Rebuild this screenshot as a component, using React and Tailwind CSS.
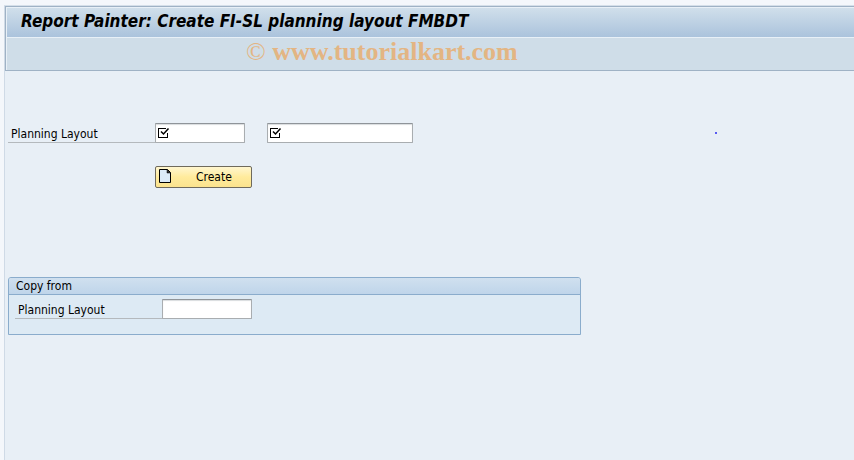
const CheckMark = () => (
  <svg
    className="w-3 h-3 pointer-events-none col-start-1 row-start-1 ml-[3px] self-center"
    viewBox="0 0 12 12"
    fill="none"
    stroke="#000"
    shapeRendering="crispEdges"
    aria-hidden="true"
  >
    <path d="M8 1.5H0.5V10.5H9.5V6" />
    <path
      d="M3 4.5L5.5 7L10.5 1.5"
      strokeWidth="1.5"
      shapeRendering="geometricPrecision"
    />
  </svg>
);

const PageIcon = () => (
  <svg className="w-3 h-[14px] self-start mt-[2px]" viewBox="0 0 12 14" aria-hidden="true">
    <path
      d="M0.5 0.5H8.5L11.5 3.5V13.5H0.5Z"
      fill="#dcebf7"
      stroke="#000"
      strokeWidth="1"
    />
    <path d="M8 0.5V4H11.5Z" fill="#333" stroke="#000" strokeWidth="0.5" />
  </svg>
);

const Field = ({ id, label, className, required }) => (
  <div className={`grid ${className}`}>
    <input
      id={id}
      type="text"
      aria-label={label}
      className="w-full h-5 col-start-1 row-start-1 bg-white border border-[#a9adb0] border-t-[#8f9499] rounded-[1px] px-1 shadow-[inset_0_1px_1px_#d9dcde] outline-none"
    />
    {required && <CheckMark />}
  </div>
);

const App = () => {
  return (
    <div className="min-h-screen flex flex-col bg-[#f4f7fb] pl-1 text-xs leading-4 text-black font-['DejaVu_Sans_Condensed','DejaVu_Sans',sans-serif]">
      <div className="h-[6px] border-b border-[#d5dfe9]" />
      <main className="flex-1 border-l border-[#cfdae6] bg-[#e8eff6]">
        <header className="border-l border-y border-[#9fb2c5]">
          <div className="h-[31px] border-l border-t border-b border-[#e8f0f7] bg-linear-to-b from-[#d0dfeb] to-[#abc3dc] pl-[14px] pb-[4px] flex items-center">
            <h1 className="text-[17px] leading-5 font-bold italic whitespace-nowrap">
              Report Painter: Create FI-SL planning layout FMBDT
            </h1>
          </div>
          <div className="h-8 border-l border-[#e8f0f7] bg-[#cfdde8] pl-[239px] pb-[4px] flex items-center">
            <p className="text-[26px] leading-7 text-[#e3b583] font-['Liberation_Serif',serif] whitespace-nowrap">
              © <span className="font-bold">www.tutorialkart.com</span>
            </p>
          </div>
        </header>

        <form className="pl-[3px] pt-[52px]" onSubmit={(e) => e.preventDefault()}>
          <div className="flex items-center">
            <label
              htmlFor="layout"
              className="w-[147px] h-5 pl-[3px] pt-[3px] border-b border-[#b4b9bd]"
            >
              Planning Layout
            </label>
            <Field id="layout" label="Planning Layout" className="w-[90px]" required />
            <Field
              id="description"
              label="Layout description"
              className="w-[146px] ml-[22px]"
              required
            />
            <span className="w-[2px] h-[2px] ml-[302px] rounded-full bg-[#2a2af0]" />
          </div>

          <button
            type="submit"
            className="flex items-center w-[97px] h-[22px] mt-[23px] ml-[147px] pl-[3px] rounded-[2px] border border-[#6f6a5c] bg-linear-to-b from-[#fff6cf] via-[#ffeb9c] to-[#fbe38e]"
          >
            <PageIcon />
            <span className="ml-[25px]">Create</span>
          </button>

          <fieldset
            aria-labelledby="copy-from"
            className="w-[573px] max-w-full h-[58px] mt-[89px] rounded-t-[3px] border border-[#8aaccc] bg-[#ddeaf4]"
          >
            <h2
              id="copy-from"
              className="h-[17px] pl-[7px] rounded-t-[2px] border-b border-[#8aaccc] bg-linear-to-b from-[#d0e0ef] to-[#bfd5ea]"
            >
              Copy from
            </h2>
            <div className="flex mt-1 ml-[6px]">
              <label
                htmlFor="source"
                className="w-[147px] h-5 pl-[3px] pt-[3px] border-b border-[#b4b9bd]"
              >
                Planning Layout
              </label>
              <Field id="source" label="Planning Layout" className="w-[90px]" />
            </div>
          </fieldset>
        </form>
      </main>
    </div>
  );
};

export default App;
